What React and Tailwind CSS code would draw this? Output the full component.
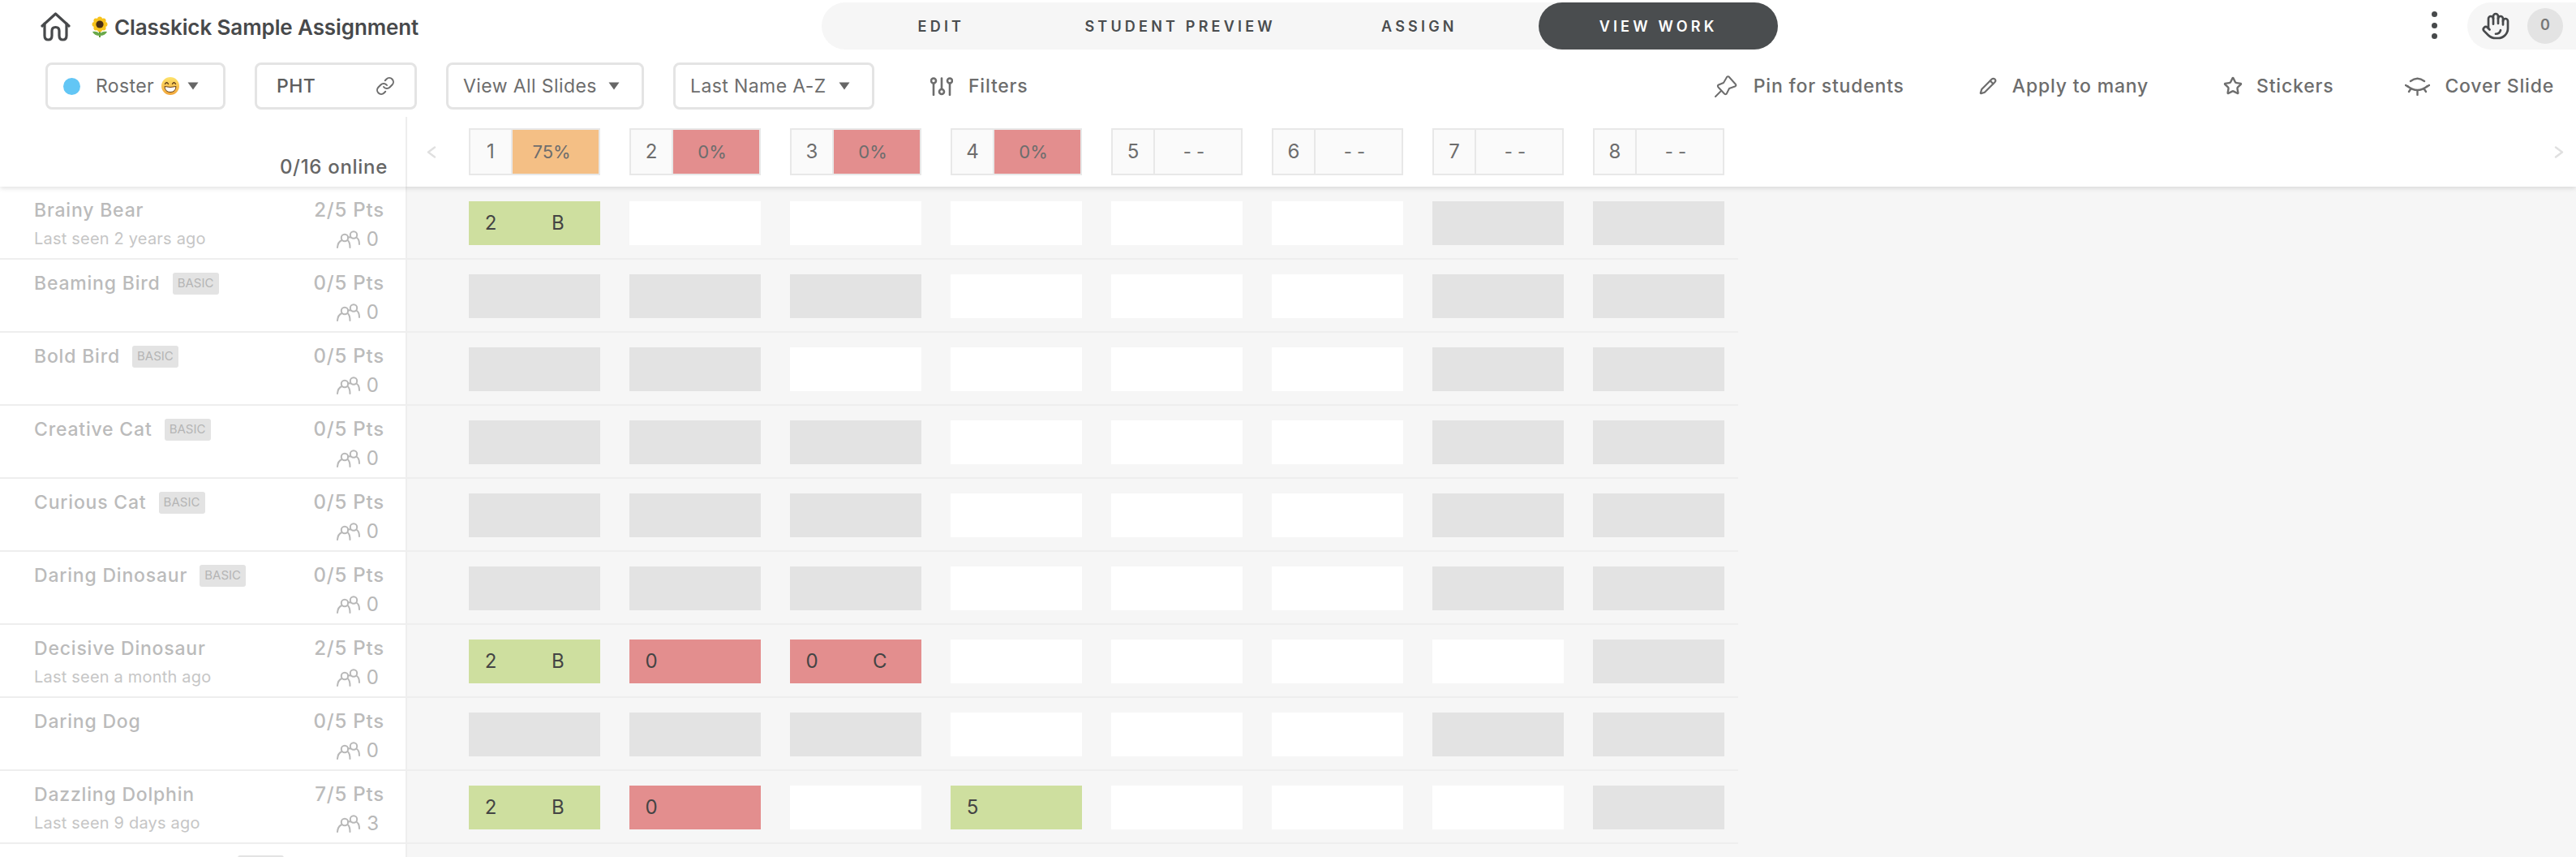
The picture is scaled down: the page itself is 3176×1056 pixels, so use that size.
import React from "react";
import { Link, Pencil, Star } from "lucide-react";

const HomeIcon = () => (
  <svg width="37" height="36" viewBox="0 0 37 36" fill="none" stroke="#47494b" strokeWidth="3.2" strokeLinecap="round" strokeLinejoin="round" className="shrink-0">
    <path d="M2 17 L18.5 2 L35 17" />
    <path d="M5 14 V29 Q5 34 9.5 34 Q14 34 14 29 V23 Q14 18.5 18.5 18.5 Q23 18.5 23 23 V29 Q23 34 27.5 34 Q32 34 32 29 V14" />
  </svg>
);

const Sunflower = () => (
  <svg width="22" height="26" viewBox="0 0 22 26" className="shrink-0">
    <path d="M11 14 V26" stroke="#5f9a3a" strokeWidth="2" />
    <path d="M11 24 Q4 24 2 19 Q8 18 11 22 Q14 18 20 19 Q18 24 11 24Z" fill="#6aa84a" />
    <g fill="#f7c31c">
      <circle cx="11" cy="3.5" r="3" />
      <circle cx="11" cy="16.5" r="3" />
      <circle cx="4.5" cy="10" r="3" />
      <circle cx="17.5" cy="10" r="3" />
      <circle cx="6.4" cy="5.4" r="3" />
      <circle cx="15.6" cy="5.4" r="3" />
      <circle cx="6.4" cy="14.6" r="3" />
      <circle cx="15.6" cy="14.6" r="3" />
    </g>
    <circle cx="11" cy="10" r="4.6" fill="#4a2f14" />
  </svg>
);

const GrinEmoji = () => (
  <svg width="22" height="22" viewBox="0 0 22 22" className="shrink-0">
    <defs>
      <linearGradient id="grin" x1="0" y1="0" x2="0" y2="1">
        <stop offset="0" stopColor="#fde36a" />
        <stop offset="1" stopColor="#f2a63a" />
      </linearGradient>
    </defs>
    <circle cx="11" cy="11" r="11" fill="url(#grin)" />
    <path d="M4.5 8.5 Q6.5 5 8.5 8.5 M13.5 8.5 Q15.5 5 17.5 8.5" fill="none" stroke="#5b3a1a" strokeWidth="1.4" strokeLinecap="round" />
    <path d="M4 11.5 Q11 13.5 18 11.5 Q17.5 18.5 11 18.5 Q4.5 18.5 4 11.5Z" fill="#fff" stroke="#6a4317" strokeWidth="1" />
  </svg>
);

const Caret = () => (
  <svg width="14" height="10" viewBox="0 0 14 10" className="shrink-0">
    <path d="M0.5 0.5 H13.5 L7 9.5Z" fill="#666666" />
  </svg>
);

const FiltersIcon = () => (
  <svg width="28" height="23" viewBox="0 0 28 23" fill="none" stroke="#6d6d6d" strokeWidth="2.6" strokeLinecap="round" className="shrink-0">
    <circle cx="4" cy="4.5" r="3" />
    <path d="M4 8 V22" />
    <path d="M14 1.5 V14.5" />
    <circle cx="14" cy="18" r="3" />
    <circle cx="24" cy="4.5" r="3" />
    <path d="M24 8 V22" />
  </svg>
);

const PinIcon = () => (
  <svg width="28" height="27" viewBox="0 0 28 27" fill="none" stroke="#6d6d6d" strokeWidth="2" strokeLinecap="round" strokeLinejoin="round" className="shrink-0">
    <path d="M17.5 1.5 Q15.5 0.5 14.5 3 L11 9 L5 11.5 Q3 12.5 4.5 14.5 L12 22.5 Q14 24 15 22 L18 16 L25 13.5 Q27 12.5 26 11 Z" />
    <path d="M8 19 L1 26" />
  </svg>
);

const LashIcon = () => (
  <svg width="31" height="24" viewBox="0 0 31 24" fill="none" stroke="#6d6d6d" strokeWidth="2.4" strokeLinecap="round" className="shrink-0">
    <path d="M7 6 Q15.5 -0.5 24 6" />
    <path d="M3 12 Q15.5 22 28 12" />
    <path d="M1 11 L3.5 12.5 M30 11 L27.5 12.5 M7 16 L5 19 M24 16 L26 19 M15.5 18.5 V23" />
  </svg>
);

const HandIcon = () => (
  <svg width="36" height="38" viewBox="0 0 24 24" fill="none" stroke="#47494b" strokeWidth="1.8" strokeLinecap="round" strokeLinejoin="round" className="shrink-0">
    <path d="M18 11V6a2 2 0 0 0-2-2a2 2 0 0 0-2 2" />
    <path d="M14 10V4a2 2 0 0 0-2-2a2 2 0 0 0-2 2v2" />
    <path d="M10 10.5V6a2 2 0 0 0-2-2a2 2 0 0 0-2 2v8" />
    <path d="M18 8a2 2 0 1 1 4 0v6a8 8 0 0 1-8 8h-2c-2.8 0-4.5-.86-5.99-2.34l-3.6-3.6a2 2 0 0 1 2.83-2.82L7 15" />
    <path d="M12 18.5c2 0 3.5-1 4-3" />
  </svg>
);

const GroupIcon = () => (
  <svg width="29" height="22" viewBox="0 0 29 22" fill="none" stroke="#b8b8b8" strokeWidth="2" strokeLinecap="round" className="shrink-0">
    <circle cx="10" cy="9" r="4.2" />
    <path d="M1 21 Q1.5 14 6.5 12 M13.5 12 Q16.5 14 16.5 21" />
    <circle cx="21" cy="5.5" r="4.2" />
    <path d="M14 9 Q14.5 8 17 8.5 M25 9 Q28 11 28 17" />
  </svg>
);

const Chevron = ({ right }) => (
  <svg width="12" height="15" viewBox="0 0 12 15" fill="none" stroke="#e0e0e0" strokeWidth="2.4" strokeLinecap="round" strokeLinejoin="round" className="shrink-0">
    <path d={right ? "M2 1.5 L10 7.5 L2 13.5" : "M10 1.5 L2 7.5 L10 13.5"} />
  </svg>
);

const slides = [
  { n: 1, score: "75%", color: "bg-[#f4bf85]" },
  { n: 2, score: "0%", color: "bg-[#e38e8e]" },
  { n: 3, score: "0%", color: "bg-[#e38e8e]" },
  { n: 4, score: "0%", color: "bg-[#e38e8e]" },
  { n: 5, score: "- -", color: "bg-[#fafafa]" },
  { n: 6, score: "- -", color: "bg-[#fafafa]" },
  { n: 7, score: "- -", color: "bg-[#fafafa]" },
  { n: 8, score: "- -", color: "bg-[#fafafa]" },
];

// g = locked gray, w = empty white, [color, points, letter] = graded
const G = (pts, letter) => ["bg-[#cedf9f]", pts, letter];
const R = (pts, letter) => ["bg-[#e38e8e]", pts, letter];

const students = [
  { name: "Brainy Bear", seen: "Last seen 2 years ago", pts: "2/5 Pts", help: 0, cells: [G(2, "B"), "w", "w", "w", "w", "w", "g", "g"] },
  { name: "Beaming Bird", basic: true, pts: "0/5 Pts", help: 0, cells: ["g", "g", "g", "w", "w", "w", "g", "g"] },
  { name: "Bold Bird", basic: true, pts: "0/5 Pts", help: 0, cells: ["g", "g", "w", "w", "w", "w", "g", "g"] },
  { name: "Creative Cat", basic: true, pts: "0/5 Pts", help: 0, cells: ["g", "g", "g", "w", "w", "w", "g", "g"] },
  { name: "Curious Cat", basic: true, pts: "0/5 Pts", help: 0, cells: ["g", "g", "g", "w", "w", "w", "g", "g"] },
  { name: "Daring Dinosaur", basic: true, pts: "0/5 Pts", help: 0, cells: ["g", "g", "g", "w", "w", "w", "g", "g"] },
  { name: "Decisive Dinosaur", seen: "Last seen a month ago", pts: "2/5 Pts", help: 0, cells: [G(2, "B"), R(0), R(0, "C"), "w", "w", "w", "w", "g"] },
  { name: "Daring Dog", pts: "0/5 Pts", help: 0, cells: ["g", "g", "g", "w", "w", "w", "g", "g"] },
  { name: "Dazzling Dolphin", seen: "Last seen 9 days ago", pts: "7/5 Pts", help: 3, cells: [G(2, "B"), R(0), "w", G(5), "w", "w", "w", "g"] },
];

const Cell = ({ cell }) => {
  if (cell === "w") return <div className="w-[162px] h-[54px] bg-white" />;
  if (cell === "g") return <div className="w-[162px] h-[54px] bg-[#e3e3e3]" />;
  return (
    <div className={`w-[162px] h-[54px] flex items-center text-[24px] text-[#444444] ${cell[0]}`}>
      <span className="w-[54px] text-center">{cell[1]}</span>
      <span className="pl-[48px]">{cell[2]}</span>
    </div>
  );
};

const StudentRow = ({ s }) => (
  <div className="flex h-[90px] shrink-0">
    <div className="w-[502px] shrink-0 bg-white border-r-2 border-b-2 border-[#eeeeee] pl-[42px] pr-[26px] pt-[13px] flex justify-between">
      <div>
        <div className="flex items-center h-[32px]">
          <span className="text-[23px] font-medium text-[#bbbbbb] tracking-[0.8px]">{s.name}</span>
          {s.basic && (
            <span className="ml-[15px] w-[57px] h-[27px] flex items-center justify-center rounded-[3px] bg-[#e3e3e3] text-[15px] text-[#b5b5b5]">BASIC</span>
          )}
        </div>
        {s.seen && <div className="mt-[4px] text-[20px] tracking-[0.2px] text-[#c6c6c6]">{s.seen}</div>}
      </div>
      <div className="flex flex-col items-end">
        <div className="h-[32px] flex items-center text-[24px] font-medium text-[#bbbbbb] tracking-[0.8px]">{s.pts}</div>
        <div className="mt-[2px] pr-[7px] flex items-center gap-[8px] text-[24px] text-[#b8b8b8]">
          <GroupIcon />
          <span>{s.help}</span>
        </div>
      </div>
    </div>
    <div className="w-[1641px] shrink-0 border-b-2 border-[#eeeeee] pl-[76px] pt-[18px] flex gap-[36px]">
      {s.cells.map((cell, i) => (
        <Cell key={i} cell={cell} />
      ))}
    </div>
  </div>
);

const SelectBox = ({ width, children }) => (
  <div className={`h-[58px] ${width} shrink-0 border-[3px] border-[#e4e4e4] rounded-[8px] bg-white flex items-center text-[23px] tracking-[0.4px] text-[#6d6d6d]`}>
    {children}
  </div>
);

const Action = ({ icon, label, gap, className = "" }) => (
  <div className={`flex items-center ${gap} text-[23px] font-medium tracking-[0.8px] text-[#6d6d6d] ${className}`}>
    {icon}
    <span>{label}</span>
  </div>
);

export default function App() {
  return (
    <div className="w-[3176px] h-[1056px] overflow-hidden flex flex-col bg-[#f6f6f6] font-['Inter',sans-serif]">
      <div className="relative z-10 bg-white shadow-[0_2px_6px_rgba(0,0,0,0.12)] shrink-0">
        {/* top bar */}
        <div className="flex h-[64px]">
          <div className="w-[1013px] shrink-0 pl-[50px] pt-[15px] flex items-start">
            <HomeIcon />
            <div className="ml-[25px] mt-[5px]"><Sunflower /></div>
            <span className="ml-[7px] mt-[1px] text-[26px] leading-[36px] font-semibold text-[#47494b] tracking-[-0.1px] whitespace-nowrap">Classkick Sample Assignment</span>
          </div>
          <div className="w-[1179px] h-[58px] mt-[3px] shrink-0 rounded-[29px] bg-[#f6f6f6] grid grid-cols-4 text-[18px] font-semibold tracking-[4.2px] text-[#4a4d4f]">
            <div className="flex items-center justify-center">EDIT</div>
            <div className="flex items-center justify-center">STUDENT PREVIEW</div>
            <div className="flex items-center justify-center">ASSIGN</div>
            <div className="flex items-center justify-center rounded-[29px] bg-[#4a4d4f] text-white">VIEW WORK</div>
          </div>
          <div className="flex-1 flex items-start justify-end">
            <div className="mt-[14px] mr-[37px] flex flex-col gap-[6.5px]">
              <span className="w-[7px] h-[7px] rounded-full bg-[#47494b]" />
              <span className="w-[7px] h-[7px] rounded-full bg-[#47494b]" />
              <span className="w-[7px] h-[7px] rounded-full bg-[#47494b]" />
            </div>
            <div className="w-[134px] h-[58px] mt-[3px] rounded-l-[29px] bg-[#f6f6f6] flex items-center pl-[17px]">
              <HandIcon />
              <span className="ml-[21px] w-[44px] h-[44px] rounded-full bg-[#e3e3e3] flex items-center justify-center text-[18px] font-semibold text-[#777777] pb-[3px]">0</span>
            </div>
          </div>
        </div>

        {/* toolbar */}
        <div className="flex items-center h-[58px] mt-[13px] pl-[56px]">
          <SelectBox width="w-[222px]">
            <span className="ml-[19px] w-[21px] h-[21px] rounded-full bg-[#62c6f5]" />
            <span className="ml-[19px]">Roster</span>
            <span className="ml-[9px]"><GrinEmoji /></span>
            <span className="ml-[10px]"><Caret /></span>
          </SelectBox>
          <SelectBox width="w-[200px] ml-[36px]">
            <span className="ml-[24px] font-medium text-[#5d5d5d]">PHT</span>
            <Link size={24} strokeWidth={2} className="ml-auto mr-[24px] text-[#6d6d6d]" />
          </SelectBox>
          <SelectBox width="w-[244px] ml-[36px]">
            <span className="ml-[18px] whitespace-nowrap">View All Slides</span>
            <span className="ml-auto mr-[27px]"><Caret /></span>
          </SelectBox>
          <SelectBox width="w-[248px] ml-[36px]">
            <span className="ml-[18px] whitespace-nowrap">Last Name A-Z</span>
            <span className="ml-auto mr-[27px]"><Caret /></span>
          </SelectBox>
          <Action className="ml-[69px]" gap="gap-[19px]" icon={<FiltersIcon />} label="Filters" />
          <Action className="ml-auto" gap="gap-[20px]" icon={<PinIcon />} label="Pin for students" />
          <Action className="ml-[92px]" gap="gap-[19px]" icon={<Pencil size={22} strokeWidth={2.4} />} label="Apply to many" />
          <Action className="ml-[92px]" gap="gap-[17px]" icon={<Star size={24} strokeWidth={2.4} />} label="Stickers" />
          <Action className="ml-[88px] mr-[27px]" gap="gap-[18px]" icon={<LashIcon />} label="Cover Slide" />
        </div>

        {/* slide header */}
        <div className="flex h-[95px]">
          <div className="w-[502px] h-[86px] mt-[9px] shrink-0 border-r-2 border-[#eeeeee] pr-[22px] pb-[6px] flex items-end justify-end text-[24px] tracking-[0.7px] font-medium text-[#666666]">
            0/16 online
          </div>
          <div className="flex-1 flex items-start pt-[23px]">
            <div className="w-[76px] h-[58px] pl-[24px] flex items-center"><Chevron /></div>
            <div className="flex gap-[36px]">
              {slides.map(s => (
                <div key={s.n} className="w-[162px] h-[58px] flex border-2 border-[#e8e8e8] bg-[#fafafa] text-[22px] text-[#6d6d6d]">
                  <span className="w-[52px] shrink-0 border-r-2 border-[#e8e8e8] text-[24px] flex items-center justify-center">{s.n}</span>
                  <span className={`flex-1 pr-[10px] flex items-center justify-center ${s.color}`}>{s.score}</span>
                </div>
              ))}
            </div>
            <div className="ml-auto mr-[15px] h-[58px] flex items-center"><Chevron right /></div>
          </div>
        </div>
      </div>

      {/* students */}
      <div className="flex-1 overflow-hidden flex flex-col">
        {students.map(s => (
          <StudentRow key={s.name} s={s} />
        ))}
        <div className="flex shrink-0 h-[16px]">
          <div className="w-[502px] bg-white border-r-2 border-[#eeeeee] pl-[293px] pt-[14px]">
            <div className="w-[57px] h-[27px] rounded-[3px] bg-[#e3e3e3]" />
          </div>
        </div>
      </div>
    </div>
  );
}
